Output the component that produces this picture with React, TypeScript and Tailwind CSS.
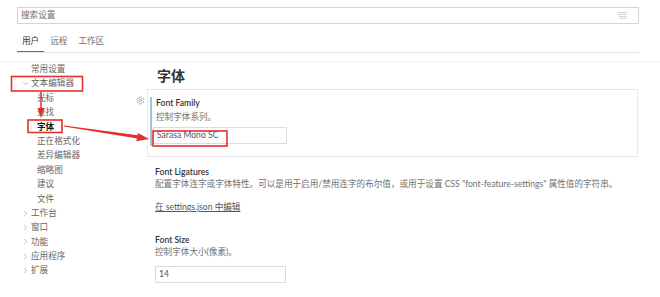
import { ChevronDown, ChevronRight, Settings } from "lucide-react";

const font = { fontFamily: "Lato, 'Noto Sans CJK SC', sans-serif" };

function TreeRow({ label, indent = 0, chevron, bold }: { label: string; indent?: number; chevron?: "down" | "right"; bold?: boolean }) {
    return (
        <div className="flex items-center h-[14.4px] leading-[14.4px]" style={{ paddingLeft: indent }}>
            <span className="w-[10px] flex items-center justify-start text-[#808080]">
                {chevron === "down" && <ChevronDown size={9} strokeWidth={1.3} />}
                {chevron === "right" && <ChevronRight size={9} strokeWidth={1.3} />}
            </span>
            <span className={bold ? "font-bold text-[#111]" : "text-[#666]"}>{label}</span>
        </div>
    );
}

export default function App() {
    return (
        <div className="relative w-[660px] h-[297px] bg-white overflow-hidden text-[8.6px]" style={font}>
            <div className="px-[17px] pt-[7px]">
                <div className="w-[622px] h-[17px] border border-[#d4d4d4] flex items-center justify-between px-[3px]">
                    <span className="text-[#6f6f6f]">搜索设置</span>
                    <svg width="10" height="8" viewBox="0 0 10 8" className="mr-[7px]">
                        <path d="M0 0.5h9M0 2.5h9M1 4.5h8M2 6.5h7" stroke="#d2d2d2" strokeWidth="1" />
                    </svg>
                </div>
                <div className="flex w-[622px] h-[29px] border-b border-[#e4e4e4] gap-[1px]">
                    <div className="px-[5px] pt-[11px] leading-[12px] border-b border-[#6f6f6f] text-[#333]">用户</div>
                    <div className="px-[5px] pt-[11px] leading-[12px] text-[#6f6f6f]">远程</div>
                    <div className="px-[5px] pt-[11px] leading-[12px] text-[#6f6f6f]">工作区</div>
                </div>
            </div>
            <div className="mt-[8px] h-px bg-[#f1f1f1]" />

            <div className="flex">
                <div className="w-[133px] pl-[21px]">
                    <TreeRow label="常用设置" />
                    <TreeRow label="文本编辑器" chevron="down" />
                    <TreeRow label="光标" indent={6} />
                    <TreeRow label="查找" indent={6} />
                    <TreeRow label="字体" indent={6} bold />
                    <TreeRow label="正在格式化" indent={6} />
                    <TreeRow label="差异编辑器" indent={6} />
                    <TreeRow label="缩略图" indent={6} />
                    <TreeRow label="建议" indent={6} />
                    <TreeRow label="文件" indent={6} />
                    <TreeRow label="工作台" chevron="right" />
                    <TreeRow label="窗口" chevron="right" />
                    <TreeRow label="功能" chevron="right" />
                    <TreeRow label="应用程序" chevron="right" />
                    <TreeRow label="扩展" chevron="right" />
                </div>

                <div className="w-[14px] pt-[34px] flex justify-center">
                    <Settings size={9} strokeWidth={1.6} className="text-[#8a8a8a]" />
                </div>

                <div className="w-[491px]">
                    <div className="h-[27px] flex items-center pl-[10px] text-[14px] font-bold text-[#333]">字体</div>

                    <div className="h-[68px] border border-[#e8e8e8] pt-[7px] pl-[2px] flex">
                        <div className="w-[2px] h-[49px] bg-[#9cc3e0]" />
                        <div className="pl-[1px]">
                            <div className="pl-[3px] leading-[13px] font-semibold text-[#333]">Font Family</div>
                            <div className="pl-[3px] leading-[14px] text-[#717171]">控制字体系列。</div>
                            <div className="mt-[3px] w-[134px] h-[17px] border border-[#dcdcdc] flex items-center pl-[3px] text-[#555]">
                                Sarasa Mono SC
                            </div>
                        </div>
                    </div>

                    <div className="pl-[8px]">
                        <div className="mt-[9px] leading-[12px] font-semibold text-[#333]">Font Ligatures</div>
                        <div className="leading-[12px] text-[#717171]">
                            配置字体连字或字体特性。可以是用于启用/禁用连字的布尔值，或用于设置 CSS "font-feature-settings" 属性值的字符串。
                        </div>
                        <div className="mt-[11px] leading-[12px] text-[#555] underline">在 settings.json 中编辑</div>

                        <div className="mt-[21px] leading-[12px] font-semibold text-[#333]">Font Size</div>
                        <div className="leading-[12px] text-[#717171]">控制字体大小(像素)。</div>
                        <div className="mt-[8px] w-[131px] h-[17px] border border-[#dcdcdc] flex items-center pl-[3px] text-[#555]">14</div>
                    </div>
                </div>
            </div>

            {/* annotation overlay */}
            <svg className="absolute inset-0 pointer-events-none" width="660" height="297" viewBox="0 0 660 297">
                <g fill="none" stroke="#e3302f" strokeWidth="1.6">
                    <rect x="11.5" y="76.5" width="71" height="14.5" />
                    <rect x="28" y="120" width="34" height="12.5" />
                    <rect x="153" y="131" width="74" height="15" />
                </g>
                <line x1="41" y1="92" x2="41" y2="109" stroke="#e3302f" strokeWidth="1.5" />
                <polygon points="37.5,108 44.5,108 41,118" fill="#e3302f" />
                <polygon points="64,125.5 64,126.5 137.5,138.4 137.7,135.2" fill="#e3302f" />
                <polygon points="136.3,141.3 137.9,133.1 149,139" fill="#e3302f" />
            </svg>
        </div>
    );
}
